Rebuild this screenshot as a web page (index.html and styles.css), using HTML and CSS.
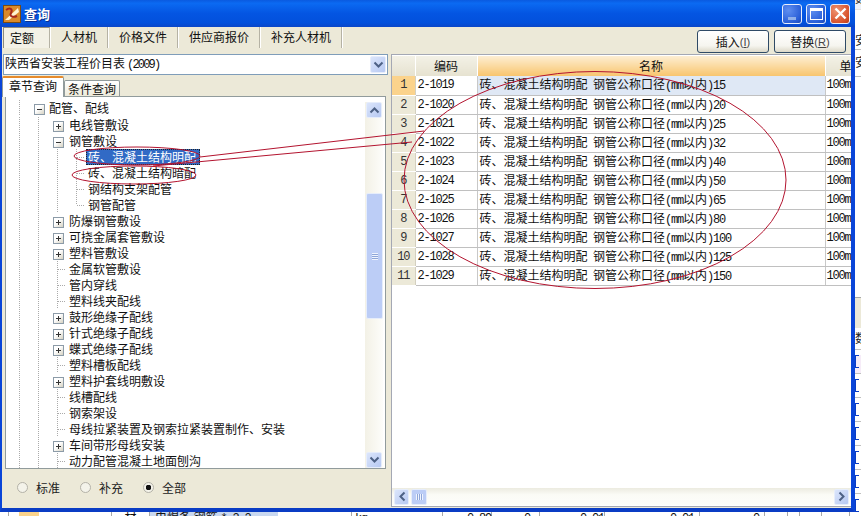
FILE: index.html
```html
<!DOCTYPE html>
<html lang="zh-CN">
<head>
    <meta charset="UTF-8">
    <title>查询</title>
    <link rel="stylesheet" href="styles.css">
</head>
<body>
<div class="desktop">
    <div class="window">
        <div class="titlebar">
            <svg class="app-icon" width="18" height="18" viewBox="0 0 18 18">
                <rect x="0.5" y="0.5" width="17" height="17" fill="#d98a2b" stroke="#7a4a12"/>
                <path d="M2 15 L15 3 L16 7 L6 15 Z" fill="#fff3d0"/>
                <path d="M3 5 C7 2 10 4 8 8 C6 11 10 13 14 11" fill="none" stroke="#a8281c" stroke-width="2"/>
            </svg>
            <span class="title-text">查询</span>
            <div class="win-btns">
                <span class="win-btn"><i class="min-glyph"></i></span>
                <span class="win-btn"><i class="max-glyph"></i></span>
                <span class="win-btn close">
                    <svg width="13" height="13" viewBox="0 0 13 13"><path d="M1.5 1.5 L11.5 11.5 M11.5 1.5 L1.5 11.5" stroke="#fff" stroke-width="2.4"/></svg>
                </span>
            </div>
        </div>

        <div class="toolbar">
            <div class="main-tabs">
                <span class="main-tab active">定额</span>
                <span class="main-tab">人材机</span>
                <span class="main-tab">价格文件</span>
                <span class="main-tab">供应商报价</span>
                <span class="main-tab">补充人材机</span>
            </div>
            <div class="actions">
                <span class="btn">插入<span class="key">(<u>I</u>)</span></span>
                <span class="btn">替换<span class="key">(<u>R</u>)</span></span>
            </div>
        </div>

        <div class="content">
            <div class="left-panel">
                <div class="combo">
                    <span class="combo-text">陕西省安装工程价目表<span class="l year">(2009)</span></span>
                    <span class="sb-btn combo-btn"><svg width="11" height="8" viewBox="0 0 11 8"><path d="M1.5 1.5 L5.5 5.5 L9.5 1.5" fill="none" stroke="#4d6185" stroke-width="2"/></svg></span>
                </div>
                <div class="sub-tabs">
                    <span class="sub-tab active">章节查询</span>
                    <span class="sub-tab">条件查询</span>
                </div>
                <div class="tree-box">
                    <div class="tree">
                        <div class="row"><i class="g"></i><i class="x minus"></i><span class="label">配管、配线</span></div>
                        <div class="row"><i class="g"></i><i class="g"></i><i class="x plus"></i><span class="label">电线管敷设</span></div>
                        <div class="row"><i class="g"></i><i class="g"></i><i class="x minus"></i><span class="label">钢管敷设</span></div>
                        <div class="row"><i class="g"></i><i class="g"></i><i class="g"></i><i class="t"></i><span class="label selected">砖、混凝土结构明配</span></div>
                        <div class="row"><i class="g"></i><i class="g"></i><i class="g"></i><i class="t"></i><span class="label">砖、混凝土结构暗配</span></div>
                        <div class="row"><i class="g"></i><i class="g"></i><i class="g"></i><i class="t"></i><span class="label">钢结构支架配管</span></div>
                        <div class="row"><i class="g"></i><i class="g"></i><i class="g"></i><i class="t last"></i><span class="label">钢管配管</span></div>
                        <div class="row"><i class="g"></i><i class="g"></i><i class="x plus"></i><span class="label">防爆钢管敷设</span></div>
                        <div class="row"><i class="g"></i><i class="g"></i><i class="x plus"></i><span class="label">可挠金属套管敷设</span></div>
                        <div class="row"><i class="g"></i><i class="g"></i><i class="x plus"></i><span class="label">塑料管敷设</span></div>
                        <div class="row"><i class="g"></i><i class="g"></i><i class="t"></i><span class="label">金属软管敷设</span></div>
                        <div class="row"><i class="g"></i><i class="g"></i><i class="t"></i><span class="label">管内穿线</span></div>
                        <div class="row"><i class="g"></i><i class="g"></i><i class="t"></i><span class="label">塑料线夹配线</span></div>
                        <div class="row"><i class="g"></i><i class="g"></i><i class="x plus"></i><span class="label">鼓形绝缘子配线</span></div>
                        <div class="row"><i class="g"></i><i class="g"></i><i class="x plus"></i><span class="label">针式绝缘子配线</span></div>
                        <div class="row"><i class="g"></i><i class="g"></i><i class="x plus"></i><span class="label">蝶式绝缘子配线</span></div>
                        <div class="row"><i class="g"></i><i class="g"></i><i class="t"></i><span class="label">塑料槽板配线</span></div>
                        <div class="row"><i class="g"></i><i class="g"></i><i class="x plus"></i><span class="label">塑料护套线明敷设</span></div>
                        <div class="row"><i class="g"></i><i class="g"></i><i class="t"></i><span class="label">线槽配线</span></div>
                        <div class="row"><i class="g"></i><i class="g"></i><i class="t"></i><span class="label">钢索架设</span></div>
                        <div class="row"><i class="g"></i><i class="g"></i><i class="t"></i><span class="label">母线拉紧装置及钢索拉紧装置制作、安装</span></div>
                        <div class="row"><i class="g"></i><i class="g"></i><i class="x plus"></i><span class="label">车间带形母线安装</span></div>
                        <div class="row"><i class="g"></i><i class="g"></i><i class="t"></i><span class="label">动力配管混凝土地面刨沟</span></div>
                    </div>
                    <div class="vscroll">
                        <span class="sb-btn"><svg width="11" height="8" viewBox="0 0 11 8"><path d="M1.5 6.5 L5.5 2.5 L9.5 6.5" fill="none" stroke="#4d6185" stroke-width="2"/></svg></span>
                        <div class="vtrack"><div class="vthumb"><i class="grip-h"></i></div></div>
                        <span class="sb-btn"><svg width="11" height="8" viewBox="0 0 11 8"><path d="M1.5 1.5 L5.5 5.5 L9.5 1.5" fill="none" stroke="#4d6185" stroke-width="2"/></svg></span>
                    </div>
                </div>
                <div class="radios">
                    <label class="radio"><i class="dot"></i>标准</label>
                    <label class="radio"><i class="dot"></i>补充</label>
                    <label class="radio"><i class="dot on"></i>全部</label>
                </div>
            </div>

            <div class="right-panel">
                <div class="grid-wrap">
                    <table class="grid">
                        <colgroup><col class="c-no"><col class="c-code"><col class="c-name"><col class="c-unit"></colgroup>
                        <tr><th></th><th>编码</th><th class="sorted">名称</th><th class="unit-head">单</th></tr>
                        <tr class="current"><td class="no">1</td><td class="m">2-1019</td><td>砖、混凝土结构明配&nbsp; 钢管公称口径<span class="l">(mm</span>以内<span class="l">)15</span></td><td class="m">100m</td></tr>
                        <tr><td class="no">2</td><td class="m">2-1020</td><td>砖、混凝土结构明配&nbsp; 钢管公称口径<span class="l">(mm</span>以内<span class="l">)20</span></td><td class="m">100m</td></tr>
                        <tr><td class="no">3</td><td class="m">2-1021</td><td>砖、混凝土结构明配&nbsp; 钢管公称口径<span class="l">(mm</span>以内<span class="l">)25</span></td><td class="m">100m</td></tr>
                        <tr><td class="no">4</td><td class="m">2-1022</td><td>砖、混凝土结构明配&nbsp; 钢管公称口径<span class="l">(mm</span>以内<span class="l">)32</span></td><td class="m">100m</td></tr>
                        <tr><td class="no">5</td><td class="m">2-1023</td><td>砖、混凝土结构明配&nbsp; 钢管公称口径<span class="l">(mm</span>以内<span class="l">)40</span></td><td class="m">100m</td></tr>
                        <tr><td class="no">6</td><td class="m">2-1024</td><td>砖、混凝土结构明配&nbsp; 钢管公称口径<span class="l">(mm</span>以内<span class="l">)50</span></td><td class="m">100m</td></tr>
                        <tr><td class="no">7</td><td class="m">2-1025</td><td>砖、混凝土结构明配&nbsp; 钢管公称口径<span class="l">(mm</span>以内<span class="l">)65</span></td><td class="m">100m</td></tr>
                        <tr><td class="no">8</td><td class="m">2-1026</td><td>砖、混凝土结构明配&nbsp; 钢管公称口径<span class="l">(mm</span>以内<span class="l">)80</span></td><td class="m">100m</td></tr>
                        <tr><td class="no">9</td><td class="m">2-1027</td><td>砖、混凝土结构明配&nbsp; 钢管公称口径<span class="l">(mm</span>以内<span class="l">)100</span></td><td class="m">100m</td></tr>
                        <tr><td class="no">10</td><td class="m">2-1028</td><td>砖、混凝土结构明配&nbsp; 钢管公称口径<span class="l">(mm</span>以内<span class="l">)125</span></td><td class="m">100m</td></tr>
                        <tr><td class="no">11</td><td class="m">2-1029</td><td>砖、混凝土结构明配&nbsp; 钢管公称口径<span class="l">(mm</span>以内<span class="l">)150</span></td><td class="m">100m</td></tr>
                    </table>
                </div>
                <div class="hscroll">
                    <span class="sb-btn wide"><svg width="8" height="11" viewBox="0 0 8 11"><path d="M6.5 1.5 L2.5 5.5 L6.5 9.5" fill="none" stroke="#4d6185" stroke-width="2"/></svg></span>
                    <div class="hthumb"><i class="grip-v"></i></div>
                    <span class="sb-btn wide end"><svg width="8" height="11" viewBox="0 0 8 11"><path d="M1.5 1.5 L5.5 5.5 L1.5 9.5" fill="none" stroke="#4d6185" stroke-width="2"/></svg></span>
                </div>
            </div>
        </div>
    </div>

    <div class="behind-right">
        <div class="br-row first">数</div>
        <div class="br-row r2">安</div>
        <div class="br-row r3">安</div>
        <div class="br-gap"></div>
        <div class="br-head"></div>
        <div class="br-row mid">数</div>
        <div class="br-row box hl"><i></i></div>
        <div class="br-row box"><i></i></div>
        <div class="br-row box"><i></i></div>
        <div class="br-row box"><i></i></div>
        <div class="br-row box"><i></i></div>
        <div class="br-row box"><i></i></div>
        <div class="br-row box"><i></i></div>
        <div class="br-row box"><i></i></div>
    </div>

    <div class="behind-bottom">
        <span class="bb c1"></span>
        <span class="bb c2"><i class="bb-icon"></i><span class="l">1001/4</span></span>
        <span class="bb c4">材</span>
        <span class="bb c5">电焊条 钢筋 <span class="l">* 3.2</span></span>
        <span class="bb c6"><span class="l">kg</span></span>
        <span class="bb c7"><span class="l">0.89</span></span>
        <span class="bb c8"><span class="l">0</span></span>
        <span class="bb c9"><span class="l">0.01</span></span>
        <span class="bb c10"><span class="l">0.01</span></span>
        <span class="bb c11"><span class="l">0</span></span>
        <span class="bb c12"></span>
        <span class="bb c13"></span>
        <span class="bb c14"></span>
        <span class="bb c15"></span>
    </div>

    <svg class="marks" width="861" height="516" viewBox="0 0 861 516">
        <g fill="none" stroke="#b3142f" stroke-width="1">
            <ellipse cx="137" cy="156" rx="63" ry="9"/>
            <ellipse cx="134" cy="175" rx="62" ry="9"/>
            <path d="M200 157 L424 131"/>
            <path d="M153 166 L412 142"/>
            <ellipse cx="595" cy="180" rx="191" ry="108.5"/>
        </g>
    </svg>
</div>
</body>
</html>
```

FILE: styles.css
```css
* {
    box-sizing: border-box;
}
body {
    margin: 0;
    background: #fff;
    font-family: "Noto Sans CJK SC", "Liberation Sans", sans-serif;
    font-size: 12px;
    line-height: 16px;
    color: #111;
    overflow: hidden;
}
.desktop {
    position: relative;
    width: 861px;
    height: 516px;
    display: grid;
    grid-template-columns: 855px 6px;
    grid-template-rows: 512px 4px;
    overflow: hidden;
}
.l, .m, .no {
    font-family: "Liberation Mono", monospace;
    letter-spacing: -1.2px;
}

/* window frame */
.window {
    display: flex;
    flex-direction: column;
    border-left: 2px solid #0a45d8;
    border-right: 4px solid #0a45d8;
    border-bottom: 4px solid #0a3cc4;
    background: #ece9d8;
}
.titlebar {
    height: 27px;
    margin: 0 -4px 0 -2px;
    padding: 0 5px 0 3px;
    display: flex;
    align-items: center;
    background: linear-gradient(#0a5ae0 0%, #0b6af2 12%, #0455e2 50%, #0250dc 85%, #0a46c8 100%);
}
.app-icon {
    margin-right: 3px;
}
.title-text {
    color: #fff;
    font-size: 13px;
    font-weight: bold;
    text-shadow: 1px 1px 0 #0a2f90;
}
.win-btns {
    margin-left: auto;
    display: flex;
    gap: 4px;
}
.win-btn {
    width: 20px;
    height: 20px;
    display: flex;
    align-items: center;
    justify-content: center;
    border: 1px solid #e8eefc;
    border-radius: 3px;
    background: radial-gradient(circle at 30% 30%, #5f8ff0, #2a5fd8 70%, #1c48b8);
}
.win-btn.close {
    background: radial-gradient(circle at 30% 30%, #ee9272, #d8532c 70%, #b83c18);
}
.min-glyph {
    width: 8px;
    height: 3px;
    margin-top: 10px;
    background: #8fb0ea;
}
.max-glyph {
    width: 13px;
    height: 12px;
    border: 1px solid #fff;
    border-top-width: 3px;
}

/* top tabs and buttons */
.toolbar {
    height: 26px;
    display: flex;
    justify-content: space-between;
}
.main-tabs {
    display: flex;
    height: 21px;
    margin-left: 1px;
}
.main-tab {
    padding: 2px 10px 0 11px;
    border-right: 1px solid #b5b2a4;
    box-shadow: 1px 0 0 #fff;
}
.main-tab.active {
    padding: 2px 15px 0 6px;
    border-left: 1px solid #8c8a7e;
    border-top: 1px solid #8c8a7e;
    background: #f3f1e6;
}
.actions {
    display: flex;
    gap: 5px;
    padding: 3px 5px 0 0;
}
.btn {
    width: 72px;
    height: 23px;
    display: flex;
    align-items: center;
    justify-content: center;
    border: 1px solid #2f4a66;
    border-radius: 3px;
    background: linear-gradient(#fff, #f6f5ef 70%, #dcd8c8);
}
.key {
    font-family: "Liberation Sans", sans-serif;
    font-size: 11px;
    color: #444;
}

/* body of the window */
.content {
    flex: 1;
    display: flex;
    gap: 3px;
    min-height: 0;
}
.left-panel {
    width: 386px;
    padding-left: 1px;
    display: flex;
    flex-direction: column;
}
.combo {
    height: 21px;
    margin-top: 1px;
    padding: 1px;
    display: flex;
    align-items: center;
    justify-content: space-between;
    background: #fff;
    border: 1px solid #7f9db9;
}
.combo-text {
    padding: 0 0 2px 0;
}
.year {
    margin-left: 2px;
    letter-spacing: -1.8px;
}
.sb-btn {
    width: 16px;
    height: 16px;
    flex: none;
    display: flex;
    align-items: center;
    justify-content: center;
    border: 1px solid #e6edfb;
    border-radius: 2px;
    background: linear-gradient(135deg, #dbe5fb, #b7c9f2);
}
.combo-btn {
    height: 17px;
}
.sub-tabs {
    height: 21px;
    display: flex;
    align-items: flex-end;
}
.sub-tab {
    width: 56px;
    height: 17px;
    margin-bottom: -1px;
    line-height: 15px;
    text-align: center;
    border: 1px solid #919b9c;
    border-bottom: 0;
    border-radius: 2px 2px 0 0;
    background: linear-gradient(#fff, #ece9d8);
}
.sub-tab.active {
    width: 62px;
    height: 21px;
    margin-left: -1px;
    border-top: 2px solid #e68b2c;
    background: #fff;
    position: relative;
    z-index: 1;
}
.tree-box {
    height: 373px;
    margin: 0 2px 0 2px;
    display: flex;
    justify-content: space-between;
    background: #fff;
    border: 1px solid #919b9c;
    overflow: hidden;
}
.tree {
    padding: 4px 0 0 4px;
}
.row {
    height: 16px;
    display: flex;
    white-space: nowrap;
}
.row:first-child {
    margin: -1px 0 1px;
}
.row:first-child .label {
    padding-left: 1px;
}
.row i {
    width: 19px;
    height: 16px;
    flex: none;
    display: block;
}
.g {
    background: linear-gradient(#aaa 50%, transparent 50%) 9px 0 / 1px 2px repeat-y;
}
.t {
    background:
        linear-gradient(90deg, #aaa 50%, transparent 50%) 10px 8px / 2px 1px no-repeat,
        linear-gradient(90deg, #aaa 50%, transparent 50%) 12px 8px / 2px 1px no-repeat,
        linear-gradient(90deg, #aaa 50%, transparent 50%) 14px 8px / 2px 1px no-repeat,
        linear-gradient(90deg, #aaa 50%, transparent 50%) 16px 8px / 2px 1px no-repeat,
        linear-gradient(#aaa 50%, transparent 50%) 9px 0 / 1px 2px repeat-y;
}
.t.last {
    background:
        linear-gradient(90deg, #aaa 50%, transparent 50%) 10px 8px / 2px 1px no-repeat,
        linear-gradient(90deg, #aaa 50%, transparent 50%) 12px 8px / 2px 1px no-repeat,
        linear-gradient(90deg, #aaa 50%, transparent 50%) 14px 8px / 2px 1px no-repeat,
        linear-gradient(90deg, #aaa 50%, transparent 50%) 16px 8px / 2px 1px no-repeat,
        repeating-linear-gradient(#aaa 0 1px, transparent 1px 2px) 9px 0 / 1px 8px no-repeat;
}
.x {
    position: relative;
}
.x::before {
    content: "";
    position: absolute;
    left: 5px;
    top: 4px;
    width: 9px;
    height: 9px;
    border: 1px solid #8c9ba8;
    background:
        linear-gradient(#333, #333) center / 5px 1px no-repeat,
        linear-gradient(135deg, #fff 40%, #d6d2c2);
}
.x.plus::before {
    background:
        linear-gradient(#333, #333) center / 5px 1px no-repeat,
        linear-gradient(#333, #333) center / 1px 5px no-repeat,
        linear-gradient(135deg, #fff 40%, #d6d2c2);
}
.label {
    padding: 0 1px 0 2px;
}
.label.selected {
    padding: 0 4px 0 2px;
    background: #316ac5;
    color: #fff;
    outline: 1px dotted #222;
    outline-offset: -1px;
}
.vscroll {
    width: 18px;
    margin: 5px 2px 0 0;
    padding-left: 1px;
    display: flex;
    flex-direction: column;
    background: linear-gradient(90deg, #f3f1e6, #fdfdfa);
}
.vtrack {
    flex: 1;
    padding-top: 75px;
    padding-bottom: 133px;
    display: flex;
}
.vthumb {
    flex: 1;
    display: flex;
    align-items: center;
    justify-content: center;
    border: 1px solid #e6edfb;
    border-radius: 2px;
    background: #bccdf6;
}
.grip-h {
    width: 6px;
    height: 7px;
    background: repeating-linear-gradient(#f0f4fe 0 1px, #8ea6d8 1px 2px);
}
.radios {
    flex: 1;
    padding: 0 0 2px 14px;
    display: flex;
    align-items: center;
    gap: 20px;
}
.radio {
    display: flex;
    align-items: center;
    gap: 8px;
    color: #222;
}
.dot {
    width: 11px;
    height: 11px;
    border: 1px solid #b4b2a8;
    border-radius: 50%;
    background: #f4f3ea;
}
.dot.on {
    background: radial-gradient(circle, #111 0 2.6px, #f4f3ea 3px);
}

/* right hand grid */
.right-panel {
    width: 460px;
    margin-top: 1px;
    margin-bottom: 1px;
    display: flex;
    flex-direction: column;
    background: #fff;
    border: 1px solid #a4a8b4;
    border-right: 0;
}
.grid-wrap {
    flex: 1;
    overflow: hidden;
    padding-top: 1px;
}
.grid {
    width: 459px;
    table-layout: fixed;
    border-collapse: collapse;
}
.c-no { width: 23px; }
.c-code { width: 62px; }
.c-name { width: 348px; }
.c-unit { width: 26px; }
.grid th {
    height: 20px;
    padding: 0;
    font-weight: normal;
    background: linear-gradient(#f3f1e6, #e6e2d0);
    border-right: 1px solid #fff;
}
.grid th.sorted {
    background: linear-gradient(#fdeed2, #f8c56e);
}
.grid th.unit-head {
    padding-left: 14px;
    text-align: left;
}
.grid td {
    height: 19px;
    padding: 0 2px;
    white-space: nowrap;
    overflow: hidden;
    border-bottom: 1px solid #c0c0c0;
    border-right: 1px solid #c8c8c8;
}
.grid td:last-child {
    padding: 0 1px;
    border-right: 0;
}
.grid td.no {
    padding: 0;
    text-align: center;
    color: #333;
    background: #ece9d8;
    border-color: #d4d0c0;
    border-bottom-color: #fff;
}
.current td {
    background: #dfe8f5;
}
.current td:nth-child(2) {
    background: #fff;
}
.current td:last-child {
    background: #fff;
}
.grid .current td.no {
    background: #fbd38c;
}
.hscroll {
    height: 17px;
    margin-bottom: 1px;
    padding: 0 2px;
    display: flex;
    align-items: center;
    background: linear-gradient(#ecebe0, #fbfbf6 40%, #fdfdfa);
}
.sb-btn.wide {
    width: 15px;
}
.sb-btn.end {
    margin-left: auto;
}
.hthumb {
    width: 16px;
    height: 16px;
    margin-left: 2px;
    display: flex;
    align-items: center;
    justify-content: center;
    border: 1px solid #e6edfb;
    border-radius: 2px;
    background: #bccdf6;
}
.grip-v {
    width: 7px;
    height: 6px;
    background: repeating-linear-gradient(90deg, #f0f4fe 0 1px, #8ea6d8 1px 2px);
}

/* what shows of the main window behind the dialog */
.behind-right {
    overflow: hidden;
    color: #222;
}
.br-row {
    border-bottom: 1px solid #c0c0c0;
    white-space: nowrap;
}
.br-row.first {
    height: 16px;
    margin-top: -6px;
    padding-top: 0;
    line-height: 8px;
    border-bottom-color: #e4e4e4;
    background: #eef2fa;
}
.br-row.r2 {
    height: 40px;
    padding-top: 22px;
}
.br-row.r3 {
    height: 27px;
    padding-top: 4px;
}
.br-gap {
    height: 220px;
}
.br-head {
    height: 31px;
    border-top: 1px solid #a8a8a8;
    background: #ece9d8;
}
.br-row.mid {
    height: 22px;
    padding-top: 2px;
}
.br-row.box {
    height: 19px;
}
.br-row.hl {
    background: #f6ecf8;
}
.br-row.box i {
    display: block;
    width: 4px;
    height: 13px;
    margin-top: 5px;
    border: 1px solid #0a3cc4;
    border-right: 0;
}
.behind-bottom {
    grid-column: 1 / 3;
    display: flex;
    overflow: hidden;
    height: 4px;
}
.bb {
    flex: none;
    height: 16px;
    line-height: 10px;
    border-right: 1px solid #a8a8a8;
    white-space: nowrap;
    text-align: center;
}
.c1 { width: 9px; }
.c2 {
    width: 103px;
    text-align: left;
}
.bb-icon {
    display: inline-block;
    width: 20px;
    height: 16px;
    margin: 0 21px 0 10px;
    background: #fbd38c;
}
.c4 { width: 38px; }
.c5 {
    width: 202px;
    padding-left: 5px;
    text-align: left;
    background: linear-gradient(90deg, #c9d8f0 128px, #fff 128px);
}
.c6 { width: 91px; text-align: left; padding-left: 3px; }
.c7 { width: 49px; text-align: right; }
.c8 { width: 48px; text-align: right; padding-right: 9px; }
.c9 { width: 65px; text-align: right; }
.c10 { width: 95px; text-align: right; padding-right: 5px; }
.c11 { width: 65px; text-align: right; padding-right: 5px; }
.c12 { width: 23px; }
.c13 { width: 12px; }
.c14 { width: 22px; }
.c15 { width: 28px; }

/* the red hand-drawn notes lie over everything */
.marks {
    position: absolute;
    left: 0;
    top: 0;
    pointer-events: none;
}
```
